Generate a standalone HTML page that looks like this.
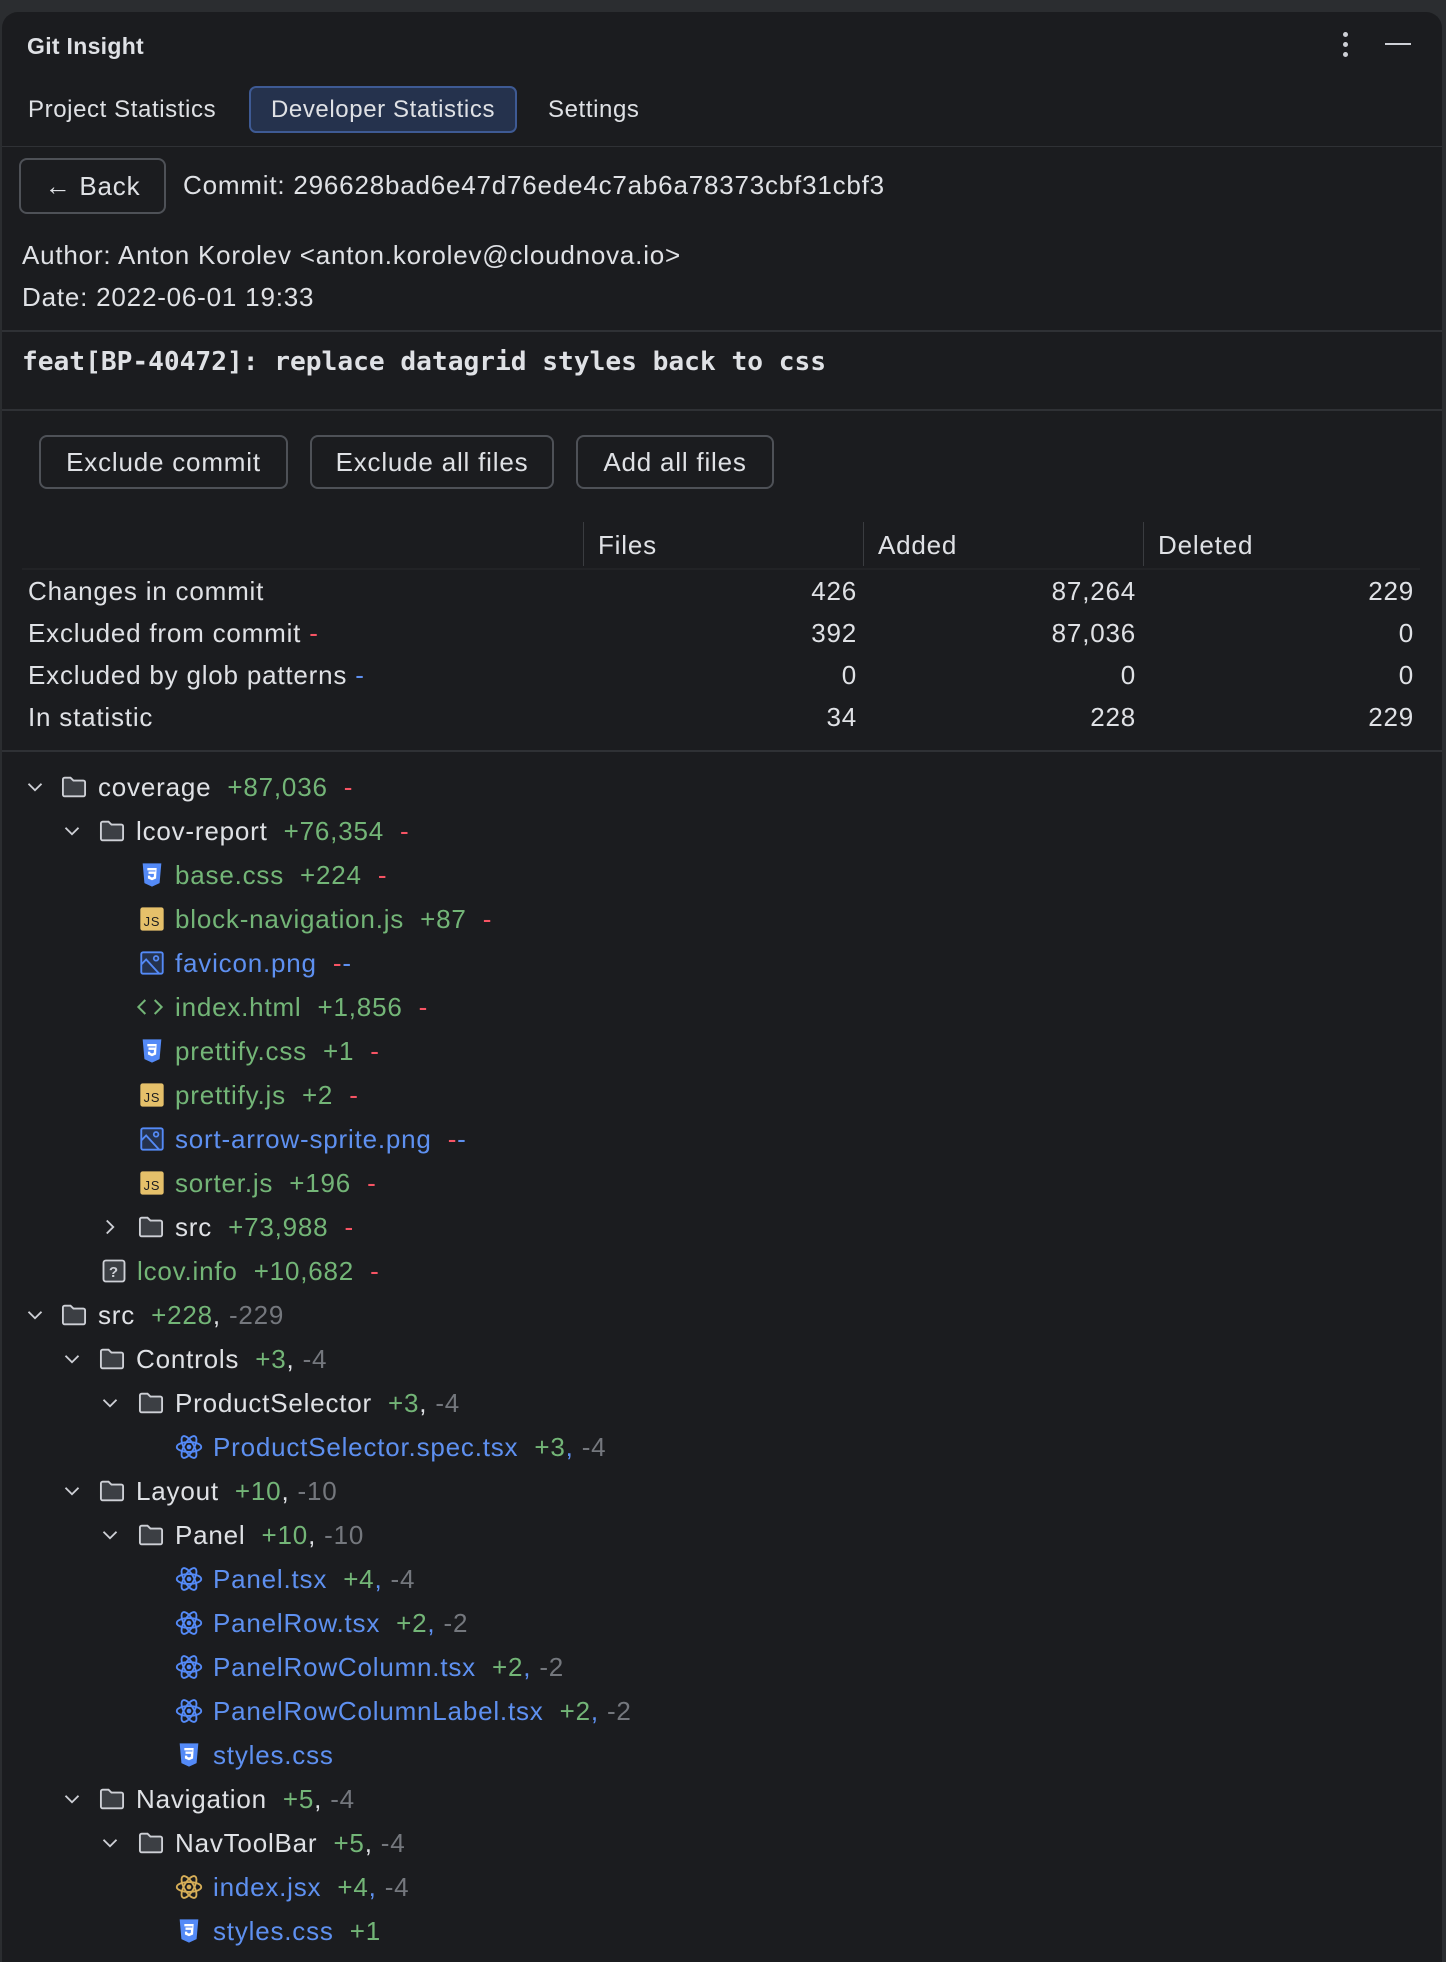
<!DOCTYPE html>
<html><head><meta charset="utf-8"><style>
*{margin:0;padding:0;box-sizing:border-box}
body{width:1446px;height:1950px;background:#2b2d30;font-family:"Liberation Sans",sans-serif;color:#dfe1e5;overflow:hidden;position:relative}
.panel{position:absolute;left:2px;top:12px;width:1440px;height:1950px;background:#1b1c1f;border-radius:16px 16px 0 0}
.a{position:absolute;white-space:nowrap;font-size:26px;line-height:30px;letter-spacing:0.8px}
.tab{font-size:24px;letter-spacing:0.6px}
.sep{position:absolute;left:2px;width:1440px;height:2px;background:#2f3135}
.btn{position:absolute;border:2px solid #4e5157;border-radius:8px;font-size:26px;letter-spacing:0.8px;display:flex;align-items:center;justify-content:center;color:#dfe1e5}
.g{color:#73b577}.r{color:#f75464}.b{color:#5e90f0}.gr{color:#74777d}
.row{position:absolute;left:0;height:44px;font-size:26px;letter-spacing:0.8px;white-space:nowrap;width:1000px}
.row svg{position:absolute;top:14px}
.t{position:absolute;top:13px;line-height:30px}
.num{position:absolute;text-align:right;width:200px}
</style></head><body>
<svg width="0" height="0" style="position:absolute">
<defs>
<symbol id="fold" viewBox="0 0 24 24"><path d="M2.5 5.5a1.5 1.5 0 0 1 1.5-1.5h5l2.5 2.5h8.5a1.5 1.5 0 0 1 1.5 1.5v10.5a1.5 1.5 0 0 1-1.5 1.5h-16a1.5 1.5 0 0 1-1.5-1.5z" fill="#3c3f44" stroke="#ced0d6" stroke-width="1.6"/></symbol>
<symbol id="down" viewBox="0 0 24 24"><path d="M6 9l6 6 6-6" fill="none" stroke="#ced0d6" stroke-width="1.7"/></symbol>
<symbol id="right" viewBox="0 0 24 24"><path d="M9 6l6 6-6 6" fill="none" stroke="#ced0d6" stroke-width="1.7"/></symbol>
<symbol id="css" viewBox="0 0 24 24"><path d="M4 2h16l-1.5 17L12 22l-6.5-3z" fill="#548af7"/><path d="M8 6h8l-.5 9-3.5 1.5-3.5-1.5v-2.5h2v1l1.5.6 1.5-.6.2-2.5H9v-2h5.9l.1-1H8z" fill="#fff"/></symbol>
<symbol id="js" viewBox="0 0 24 24"><rect x="2" y="2" width="20" height="20" rx="2" fill="#e5c06a"/><text x="12" y="18" font-family="Liberation Sans" font-size="11" fill="#1b1c1f" text-anchor="middle">JS</text></symbol>
<symbol id="img" viewBox="0 0 24 24"><rect x="2.8" y="2.8" width="18.4" height="18.4" rx="1.5" fill="#25324d" stroke="#548af7" stroke-width="1.6"/><circle cx="15.5" cy="8" r="2" fill="none" stroke="#548af7" stroke-width="1.5"/><path d="M3 13l4-4 11 12" fill="none" stroke="#548af7" stroke-width="1.6"/></symbol>
<symbol id="html" viewBox="0 0 24 24"><path d="M8 6l-6 6 6 6M16 6l6 6-6 6" fill="none" stroke="#73b577" stroke-width="1.7"/></symbol>
<symbol id="q" viewBox="0 0 24 24"><rect x="3" y="3" width="18" height="18" rx="2" fill="#3c3f44" stroke="#ced0d6" stroke-width="1.6"/><text x="12" y="17" font-family="Liberation Sans" font-size="13" font-weight="bold" fill="#ced0d6" text-anchor="middle">?</text></symbol>
<symbol id="re" viewBox="0 0 24 24"><g fill="none" stroke="#548af7" stroke-width="1.6"><ellipse cx="12" cy="12" rx="10.5" ry="4.2"/><ellipse cx="12" cy="12" rx="10.5" ry="4.2" transform="rotate(60 12 12)"/><ellipse cx="12" cy="12" rx="10.5" ry="4.2" transform="rotate(120 12 12)"/></g><circle cx="12" cy="12" r="2" fill="#548af7"/></symbol>
<symbol id="rey" viewBox="0 0 24 24"><g fill="none" stroke="#d6ae58" stroke-width="1.6"><ellipse cx="12" cy="12" rx="10.5" ry="4.2"/><ellipse cx="12" cy="12" rx="10.5" ry="4.2" transform="rotate(60 12 12)"/><ellipse cx="12" cy="12" rx="10.5" ry="4.2" transform="rotate(120 12 12)"/></g><circle cx="12" cy="12" r="2" fill="#d6ae58"/></symbol>
</defs></svg>
<div class="panel"></div>
<div class="a" style="left:27px;top:31px;font-weight:bold;font-size:23px;letter-spacing:0.3px">Git Insight</div>
<div style="position:absolute;left:1343px;top:32px;width:5px;height:5px;border-radius:50%;background:#ced0d6"></div>
<div style="position:absolute;left:1343px;top:42px;width:5px;height:5px;border-radius:50%;background:#ced0d6"></div>
<div style="position:absolute;left:1343px;top:52px;width:5px;height:5px;border-radius:50%;background:#ced0d6"></div>
<div style="position:absolute;left:1385px;top:43px;width:26px;height:2px;background:#ced0d6"></div>

<div class="a tab" style="left:28px;top:95px">Project Statistics</div>
<div style="position:absolute;left:249px;top:86px;width:268px;height:47px;background:#25324d;border:2px solid #3e5a94;border-radius:7px"></div>
<div class="a tab" style="left:249px;width:268px;text-align:center;top:95px">Developer Statistics</div>
<div class="a tab" style="left:548px;top:95px">Settings</div>
<div class="sep" style="top:146px;height:1px"></div>

<div class="btn" style="left:19px;top:158px;width:147px;height:56px">← Back</div>
<div class="a" style="left:183px;top:170px">Commit: 296628bad6e47d76ede4c7ab6a78373cbf31cbf3</div>
<div class="a" style="left:22px;top:240px">Author: Anton Korolev &lt;anton.korolev@cloudnova.io&gt;</div>
<div class="a" style="left:22px;top:282px">Date: 2022-06-01 19:33</div>
<div class="sep" style="top:330px"></div>
<div class="a" style="left:22px;top:347px;font-family:'DejaVu Sans Mono',monospace;font-weight:bold;font-size:26.2px;letter-spacing:0">feat[BP-40472]: replace datagrid styles back to css</div>
<div class="sep" style="top:409px"></div>

<div class="btn" style="left:39px;top:435px;width:249px;height:54px">Exclude commit</div>
<div class="btn" style="left:310px;top:435px;width:244px;height:54px">Exclude all files</div>
<div class="btn" style="left:576px;top:435px;width:198px;height:54px">Add all files</div>

<div style="position:absolute;left:583px;top:522px;width:1px;height:44px;background:#3a3c40"></div>
<div style="position:absolute;left:863px;top:522px;width:1px;height:44px;background:#3a3c40"></div>
<div style="position:absolute;left:1143px;top:522px;width:1px;height:44px;background:#3a3c40"></div>
<div style="position:absolute;left:22px;top:568px;width:1398px;height:2px;background:#222326"></div>
<div class="a" style="left:598px;top:530px">Files</div>
<div class="a" style="left:878px;top:530px">Added</div>
<div class="a" style="left:1158px;top:530px">Deleted</div>

<div class="a" style="left:28px;top:576px">Changes in commit</div>
<div class="a" style="left:28px;top:618px">Excluded from commit <span class="r">-</span></div>
<div class="a" style="left:28px;top:660px">Excluded by glob patterns <span class="b">-</span></div>
<div class="a" style="left:28px;top:702px">In statistic</div>
<div class="a num" style="left:657px;top:576px">426</div><div class="a num" style="left:936px;top:576px">87,264</div><div class="a num" style="left:1214px;top:576px">229</div>
<div class="a num" style="left:657px;top:618px">392</div><div class="a num" style="left:936px;top:618px">87,036</div><div class="a num" style="left:1214px;top:618px">0</div>
<div class="a num" style="left:657px;top:660px">0</div><div class="a num" style="left:936px;top:660px">0</div><div class="a num" style="left:1214px;top:660px">0</div>
<div class="a num" style="left:657px;top:702px">34</div><div class="a num" style="left:936px;top:702px">228</div><div class="a num" style="left:1214px;top:702px">229</div>
<div class="sep" style="top:750px"></div>

<div class="row" style="top:759px"><svg width="26" height="26" style="left:22px;top:15px"><use href="#down"/></svg><svg width="28" height="28" style="left:60px"><use href="#fold"/></svg><span class="t" style="left:98px">coverage&nbsp; <span class="g">+87,036</span>&nbsp; <span class="r">-</span></span></div>
<div class="row" style="top:803px"><svg width="26" height="26" style="left:59px;top:15px"><use href="#down"/></svg><svg width="28" height="28" style="left:98px"><use href="#fold"/></svg><span class="t" style="left:136px">lcov-report&nbsp; <span class="g">+76,354</span>&nbsp; <span class="r">-</span></span></div>
<div class="row" style="top:847px"><svg width="28" height="28" style="left:138px"><use href="#css"/></svg><span class="t g" style="left:175px">base.css&nbsp; +224&nbsp; <span class="r">-</span></span></div>
<div class="row" style="top:891px"><svg width="28" height="28" style="left:138px"><use href="#js"/></svg><span class="t g" style="left:175px">block-navigation.js&nbsp; +87&nbsp; <span class="r">-</span></span></div>
<div class="row" style="top:935px"><svg width="28" height="28" style="left:138px"><use href="#img"/></svg><span class="t b" style="left:175px">favicon.png&nbsp; <span class="r">-</span>-</span></div>
<div class="row" style="top:979px"><svg width="28" height="28" style="left:136px"><use href="#html"/></svg><span class="t g" style="left:175px">index.html&nbsp; +1,856&nbsp; <span class="r">-</span></span></div>
<div class="row" style="top:1023px"><svg width="28" height="28" style="left:138px"><use href="#css"/></svg><span class="t g" style="left:175px">prettify.css&nbsp; +1&nbsp; <span class="r">-</span></span></div>
<div class="row" style="top:1067px"><svg width="28" height="28" style="left:138px"><use href="#js"/></svg><span class="t g" style="left:175px">prettify.js&nbsp; +2&nbsp; <span class="r">-</span></span></div>
<div class="row" style="top:1111px"><svg width="28" height="28" style="left:138px"><use href="#img"/></svg><span class="t b" style="left:175px">sort-arrow-sprite.png&nbsp; <span class="r">-</span>-</span></div>
<div class="row" style="top:1155px"><svg width="28" height="28" style="left:138px"><use href="#js"/></svg><span class="t g" style="left:175px">sorter.js&nbsp; +196&nbsp; <span class="r">-</span></span></div>
<div class="row" style="top:1199px"><svg width="26" height="26" style="left:97px;top:15px"><use href="#right"/></svg><svg width="28" height="28" style="left:137px"><use href="#fold"/></svg><span class="t" style="left:175px">src&nbsp; <span class="g">+73,988</span>&nbsp; <span class="r">-</span></span></div>
<div class="row" style="top:1243px"><svg width="28" height="28" style="left:100px"><use href="#q"/></svg><span class="t g" style="left:137px">lcov.info&nbsp; +10,682&nbsp; <span class="r">-</span></span></div>
<div class="row" style="top:1287px"><svg width="26" height="26" style="left:22px;top:15px"><use href="#down"/></svg><svg width="28" height="28" style="left:60px"><use href="#fold"/></svg><span class="t" style="left:98px">src&nbsp; <span class="g">+228</span>, <span class="gr">-229</span></span></div>
<div class="row" style="top:1331px"><svg width="26" height="26" style="left:59px;top:15px"><use href="#down"/></svg><svg width="28" height="28" style="left:98px"><use href="#fold"/></svg><span class="t" style="left:136px">Controls&nbsp; <span class="g">+3</span>, <span class="gr">-4</span></span></div>
<div class="row" style="top:1375px"><svg width="26" height="26" style="left:97px;top:15px"><use href="#down"/></svg><svg width="28" height="28" style="left:137px"><use href="#fold"/></svg><span class="t" style="left:175px">ProductSelector&nbsp; <span class="g">+3</span>, <span class="gr">-4</span></span></div>
<div class="row" style="top:1419px"><svg width="28" height="28" style="left:175px"><use href="#re"/></svg><span class="t b" style="left:213px">ProductSelector.spec.tsx&nbsp; <span class="g">+3</span>, <span class="gr">-4</span></span></div>
<div class="row" style="top:1463px"><svg width="26" height="26" style="left:59px;top:15px"><use href="#down"/></svg><svg width="28" height="28" style="left:98px"><use href="#fold"/></svg><span class="t" style="left:136px">Layout&nbsp; <span class="g">+10</span>, <span class="gr">-10</span></span></div>
<div class="row" style="top:1507px"><svg width="26" height="26" style="left:97px;top:15px"><use href="#down"/></svg><svg width="28" height="28" style="left:137px"><use href="#fold"/></svg><span class="t" style="left:175px">Panel&nbsp; <span class="g">+10</span>, <span class="gr">-10</span></span></div>
<div class="row" style="top:1551px"><svg width="28" height="28" style="left:175px"><use href="#re"/></svg><span class="t b" style="left:213px">Panel.tsx&nbsp; <span class="g">+4</span>, <span class="gr">-4</span></span></div>
<div class="row" style="top:1595px"><svg width="28" height="28" style="left:175px"><use href="#re"/></svg><span class="t b" style="left:213px">PanelRow.tsx&nbsp; <span class="g">+2</span>, <span class="gr">-2</span></span></div>
<div class="row" style="top:1639px"><svg width="28" height="28" style="left:175px"><use href="#re"/></svg><span class="t b" style="left:213px">PanelRowColumn.tsx&nbsp; <span class="g">+2</span>, <span class="gr">-2</span></span></div>
<div class="row" style="top:1683px"><svg width="28" height="28" style="left:175px"><use href="#re"/></svg><span class="t b" style="left:213px">PanelRowColumnLabel.tsx&nbsp; <span class="g">+2</span>, <span class="gr">-2</span></span></div>
<div class="row" style="top:1727px"><svg width="28" height="28" style="left:175px"><use href="#css"/></svg><span class="t b" style="left:213px">styles.css</span></div>
<div class="row" style="top:1771px"><svg width="26" height="26" style="left:59px;top:15px"><use href="#down"/></svg><svg width="28" height="28" style="left:98px"><use href="#fold"/></svg><span class="t" style="left:136px">Navigation&nbsp; <span class="g">+5</span>, <span class="gr">-4</span></span></div>
<div class="row" style="top:1815px"><svg width="26" height="26" style="left:97px;top:15px"><use href="#down"/></svg><svg width="28" height="28" style="left:137px"><use href="#fold"/></svg><span class="t" style="left:175px">NavToolBar&nbsp; <span class="g">+5</span>, <span class="gr">-4</span></span></div>
<div class="row" style="top:1859px"><svg width="28" height="28" style="left:175px"><use href="#rey"/></svg><span class="t b" style="left:213px">index.jsx&nbsp; <span class="g">+4</span>, <span class="gr">-4</span></span></div>
<div class="row" style="top:1903px"><svg width="28" height="28" style="left:175px"><use href="#css"/></svg><span class="t b" style="left:213px">styles.css&nbsp; <span class="g">+1</span></span></div>
</body></html>
